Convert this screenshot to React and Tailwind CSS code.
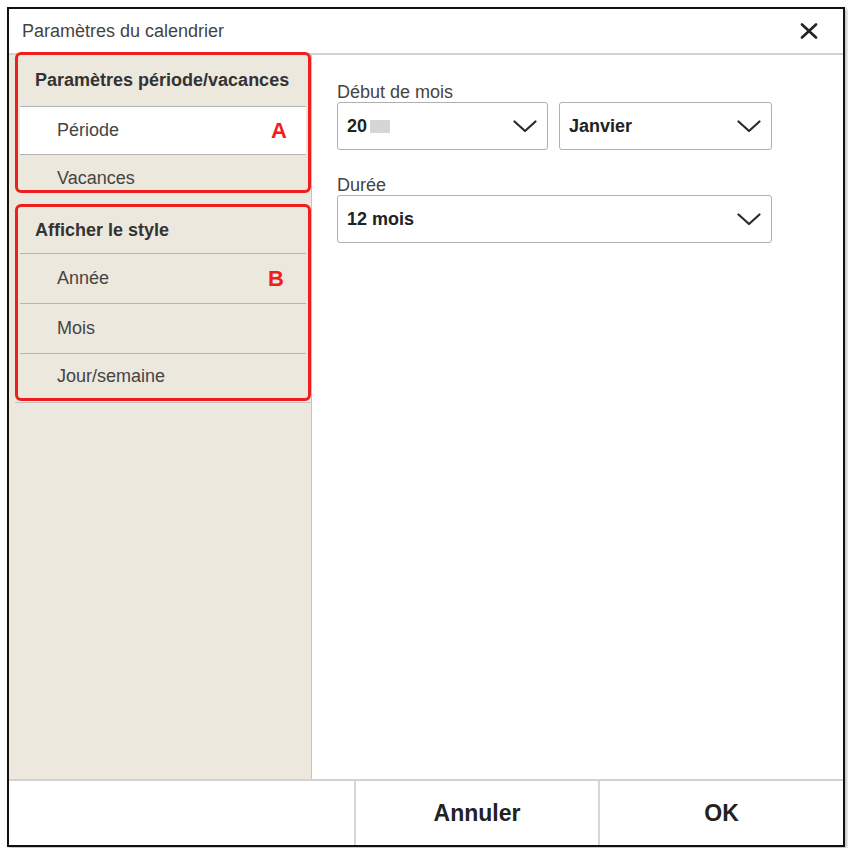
import React from "react";

function Chevron() {
  return (
    <svg width="24" height="13" viewBox="0 0 24 13" fill="none" className="shrink-0">
      <path d="M1.5 1.5 L12 11 L22.5 1.5" stroke="#2a2a2a" strokeWidth="2.2" strokeLinecap="round" strokeLinejoin="round" />
    </svg>
  );
}

function Select({ width, children }) {
  return (
    <div className={`${width} h-[48px] border-[1.5px] border-[#b0b0b0] rounded-[3px] bg-white flex items-center justify-between pl-[9px] pr-[10px]`}>
      <div className="flex items-center text-[18px] font-bold text-[#222]">{children}</div>
      <Chevron />
    </div>
  );
}

export default function App() {
  return (
    <div
      className="w-[848px] h-[848px] bg-white pt-[7px] pl-[7px]"
      style={{ fontFamily: '"Liberation Sans", Arial, sans-serif' }}
    >
      <div className="w-[838px] h-[840px] border-2 border-[#111] bg-white flex flex-col shadow-[2px_2px_3px_rgba(0,0,0,0.25)]">
        {/* Title bar */}
        <div className="h-[46px] border-b-2 border-[#d2d2d2] flex items-center justify-between pl-[13px] pr-[25px] shrink-0">
          <span className="text-[18px] text-[#444] leading-none">Paramètres du calendrier</span>
          <svg width="18" height="16" viewBox="0 0 18 16" fill="none">
            <path d="M2 1.5 L16 14.5 M16 1.5 L2 14.5" stroke="#222" strokeWidth="2.6" strokeLinecap="round" />
          </svg>
        </div>

        {/* Body */}
        <div className="h-[724px] flex shrink-0">
          {/* Sidebar */}
          <div className="w-[303px] bg-[#ede8dd] border-r border-[#c4c4c4] pl-[6px] flex flex-col">
            {/* Group A */}
            <div className="relative w-[296px] mt-[-3px] border-[3px] border-[#ee1f1c] rounded-[6px] px-[2px] bg-[#ede8dd]">
              <div className="h-[52px] flex items-center pl-[15px] text-[18px] font-bold text-[#333] border-b border-[#b4b4b4]">
                Paramètres période/vacances
              </div>
              <div className="h-[48px] flex items-center justify-between pl-[37px] pr-[19px] text-[18px] text-[#444] bg-white border-b border-[#b4b4b4]">
                <span>Période</span>
                <span className="text-[22px] font-bold text-[#ee1f1c]">A</span>
              </div>
              <div className="h-[35px] flex items-end pb-[2px] pl-[37px] text-[18px] leading-[20px] text-[#444]">
                Vacances
              </div>
            </div>

            {/* Group B */}
            <div className="w-[296px] mt-[11px] border-[3px] border-[#ee1f1c] rounded-[6px] px-[2px]">
              <div className="h-[47px] flex items-center pl-[15px] text-[18px] font-bold text-[#333] border-b border-[#b4b4b4]">
                Afficher le style
              </div>
              <div className="h-[50px] flex items-center justify-between pl-[37px] pr-[22px] text-[18px] text-[#444] border-b border-[#b4b4b4]">
                <span>Année</span>
                <span className="text-[22px] font-bold text-[#ee1f1c]">B</span>
              </div>
              <div className="h-[50px] flex items-center pl-[37px] text-[18px] text-[#444] border-b border-[#b4b4b4]">
                Mois
              </div>
              <div className="h-[44px] flex items-center pl-[37px] text-[18px] text-[#444]">
                Jour/semaine
              </div>
            </div>
            <div className="w-[296px] h-px bg-[#c4c4c4] mt-px" />
          </div>

          {/* Main */}
          <div className="flex-1 bg-white pl-[25px] pt-[27px] flex flex-col">
            <div className="text-[18px] leading-[20px] text-[#444]">Début de mois</div>
            <div className="flex gap-[11px]">
              <Select width="w-[211px]">
                <span>20</span>
                <span className="ml-[3px] w-[20px] h-[13px] bg-[#d6d6d6] inline-block" />
              </Select>
              <Select width="w-[213px]">
                <span>Janvier</span>
              </Select>
            </div>
            <div className="mt-[25px] text-[18px] leading-[20px] text-[#444]">Durée</div>
            <Select width="w-[435px]">
              <span>12 mois</span>
            </Select>
          </div>
        </div>

        {/* Footer */}
        <div className="flex-1 border-t-2 border-[#d2d2d2] flex">
          <div className="w-[347px] border-r-2 border-[#d6d6d6]" />
          <div className="w-[244px] border-r-2 border-[#d6d6d6] flex items-center justify-center text-[23px] font-bold text-[#222]">
            Annuler
          </div>
          <div className="flex-1 flex items-center justify-center text-[23px] font-bold text-[#222]">
            OK
          </div>
        </div>
      </div>
    </div>
  );
}
